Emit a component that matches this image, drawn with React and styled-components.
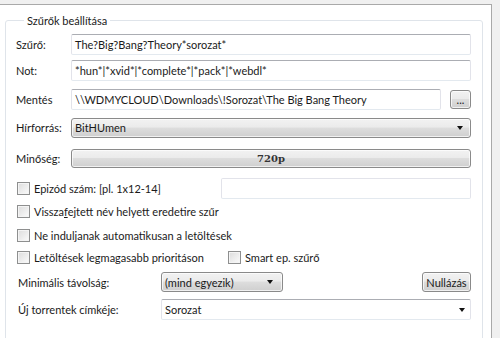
import styled, { createGlobalStyle } from "styled-components";

const Global = createGlobalStyle`
  body {
    margin: 0;
    background: #f0f0f0;
    font-family: Lato, "Open Sans", sans-serif;
    font-size: 11px;
    color: #1a1a1a;
  }
`;

const Window = styled.div`
  width: 500px;
  height: 338px;
  padding-top: 4px;
  box-sizing: border-box;
  overflow: hidden;
`;

const Panel = styled.div`
  width: 492px;
  height: 334px;
  background: #fff;
  border-top: 1px solid #a9a9a9;
  border-right: 1px solid #a9a9a9;
  box-sizing: border-box;
  padding: 8px 0 0 5px;
`;

const Group = styled.fieldset`
  width: 477px;
  height: 340px;
  box-sizing: border-box;
  margin: 0;
  padding: 0 11px 0 10px;
  border: 1px solid #dfe4ea;
  border-radius: 3px;

  legend {
    margin-left: 8px;
    padding: 0 3px;
    line-height: 15px;
  }
`;

const Row = styled.div`
  display: flex;
  align-items: center;
  height: ${(p) => p.$h || 21}px;
  margin-top: ${(p) => p.$top || 0}px;
`;

const Label = styled.div`
  width: ${(p) => p.$w || 55}px;
  flex-shrink: 0;
  padding-left: ${(p) => p.$pl || 0}px;
  box-sizing: border-box;
`;

const TextBox = styled.div`
  flex: ${(p) => (p.$w ? "none" : 1)};
  width: ${(p) => (p.$w ? p.$w + "px" : "auto")};
  height: 21px;
  box-sizing: border-box;
  border: 1px solid #e2e3ea;
  border-top-color: ${(p) => (p.$dim ? "#e2e3ea" : "#abadb3")};
  border-bottom-color: #e3e9ef;
  border-radius: 2px;
  padding: 0 0 0 3px;
  line-height: 19px;
  white-space: nowrap;
  overflow: hidden;
  display: flex;
  align-items: center;
  justify-content: space-between;
`;

const Button = styled.div`
  height: ${(p) => p.$h || 20}px;
  width: ${(p) => (p.$w ? p.$w + "px" : "auto")};
  flex: ${(p) => (p.$w ? "none" : 1)};
  box-sizing: border-box;
  border: 1px solid #8a8a8a;
  border-radius: 3px;
  background: linear-gradient(#f2f2f2 0%, #ebebeb 45%, #dddddd 50%, #cfcfcf 100%);
  box-shadow: inset 0 0 0 1px rgba(255, 255, 255, 0.7);
  display: flex;
  align-items: center;
  justify-content: ${(p) => p.$justify || "center"};
  padding: 0 ${(p) => p.$px || 0}px;
  margin-left: ${(p) => p.$ml || 0}px;
  white-space: nowrap;
`;

const Arrow = styled.span`
  width: 0;
  height: 0;
  border-left: 3.5px solid transparent;
  border-right: 3.5px solid transparent;
  border-top: 4px solid #111;
  margin-right: ${(p) => p.$mr || 4}px;
`;

const Strong = styled.span`
  font-family: "DejaVu Serif", serif;
  font-weight: bold;
  font-size: 10px;
  color: #333;
`;

const Check = styled.label`
  display: flex;
  align-items: center;
  gap: 4px;
  padding-left: 1px;
  white-space: nowrap;
  width: ${(p) => (p.$w ? p.$w + "px" : "auto")};
  flex-shrink: 0;

  &::before {
    content: "";
    width: 13px;
    height: 13px;
    box-sizing: border-box;
    border: 1px solid #8e8f8f;
    background: linear-gradient(135deg, #dcdcdc, #fbfbfb);
    box-shadow: inset 0 0 0 1px #f4f4f4;
  }
`;

const Spacer = styled.div`
  flex: 1;
`;

export default function App() {
  return (
    <Window>
      <Global />
      <Panel>
        <Group>
          <legend>Szűrők beállítása</legend>
          <Row $top={6}>
            <Label>Szűrő:</Label>
            <TextBox>The?Big?Bang?Theory*sorozat*</TextBox>
          </Row>
          <Row $top={5}>
            <Label>Not:</Label>
            <TextBox>*hun*|*xvid*|*complete*|*pack*|*webdl*</TextBox>
          </Row>
          <Row $top={8}>
            <Label>Mentés</Label>
            <TextBox $w={370}>\\WDMYCLOUD\Downloads\!Sorozat\The Big Bang Theory</TextBox>
            <Button $w={21} $h={19} $ml={9}>...</Button>
          </Row>
          <Row $top={7}>
            <Label>Hírforrás:</Label>
            <Button $justify="space-between" $px={3}>
              BitHUmen
              <Arrow />
            </Button>
          </Row>
          <Row $top={11} $h={19}>
            <Label>Minőség:</Label>
            <Button $h={19}>
              <Strong>720p</Strong>
            </Button>
          </Row>
          <Row $top={9} $h={22}>
            <Check>Epizód szám: [pl. 1x12-14]</Check>
            <Spacer />
            <TextBox $w={250} $dim />
          </Row>
          <Row $top={2}>
            <Check>
              <span>
                Vissza<u>f</u>ejtett név helyett eredetire szűr
              </span>
            </Check>
          </Row>
          <Row $top={3}>
            <Check>Ne induljanak automatikusan a letöltések</Check>
          </Row>
          <Row $top={1}>
            <Check $w={210}>Letöltések legmagasabb prioritáson</Check>
            <Check>Smart ep. szűrő</Check>
          </Row>
          <Row $top={4} $h={20}>
            <Label $w={145} $pl={2}>Minimális távolság:</Label>
            <Button $w={122} $justify="space-between" $px={3}>
              (mind egyezik)
              <Arrow $mr={6} />
            </Button>
            <Spacer />
            <Button $w={49}>Nullázás</Button>
          </Row>
          <Row $top={7}>
            <Label $w={145} $pl={2}>Új torrentek címkéje:</Label>
            <TextBox>
              Sorozat
              <Arrow $mr={5} />
            </TextBox>
          </Row>
        </Group>
      </Panel>
    </Window>
  );
}
